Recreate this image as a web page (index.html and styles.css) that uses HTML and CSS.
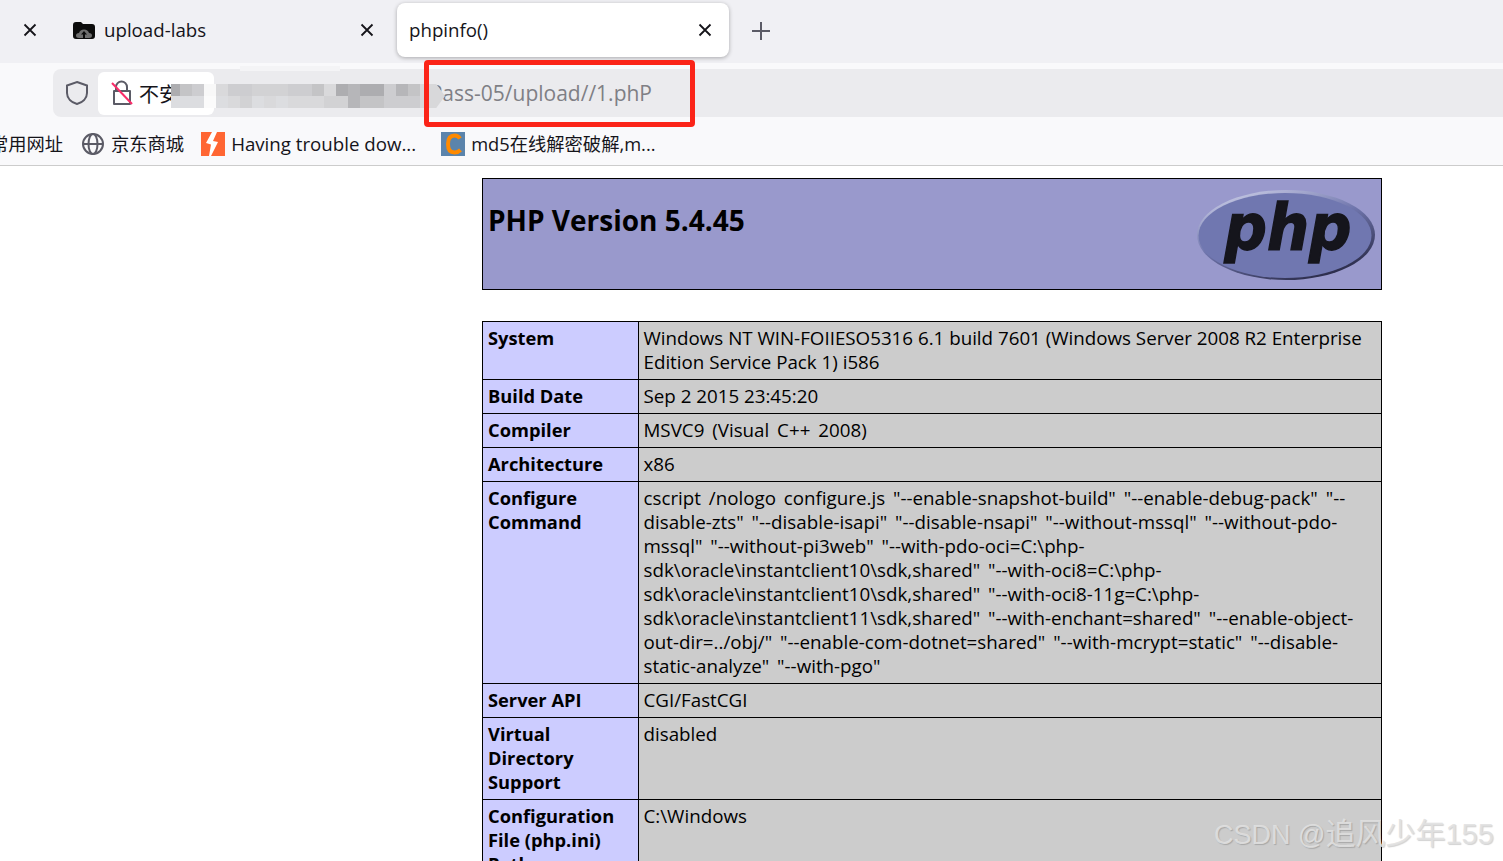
FILE: index.html
```html
<!DOCTYPE html>
<html lang="zh">
<head>
<meta charset="utf-8">
<title>phpinfo()</title>
<link rel="stylesheet" href="styles.css">
</head>
<body>
<header class="chrome">
  <div class="tabbar">
    <button class="x first"><svg width="14" height="14" viewBox="0 0 14 14"><path class="xp" d="M1.5 1.5l11 11M12.5 1.5l-11 11"/></svg></button>
    <div class="tab">
      <svg class="favicon" width="24" height="20" viewBox="0 0 24 20"><path d="M1 5q0-3 3-3h5l2 2h9q3 0 3 3v9q0 3-3 3H4q-3 0-3-3z" fill="#0c0c0c"/><path d="M7 18q-3 0-3-2.500T7 13q1-3.500 5-3.500t5 3.500q3 0 3 2.500T17 18z" fill="#6e6e6e"/><path d="M12 11l3 3.500H13V18h-2v-3.500H9z" fill="#0c0c0c"/></svg>
      <span class="tab-title">upload-labs</span>
      <button class="x"><svg width="14" height="14" viewBox="0 0 14 14"><path class="xp" d="M1.500 1.500l11 11M12.500 1.500l-11 11"/></svg></button>
    </div>
    <div class="tab active">
      <span class="tab-title">phpinfo()</span>
      <button class="x"><svg width="14" height="14" viewBox="0 0 14 14"><path class="xp" d="M1.500 1.500l11 11M12.500 1.500l-11 11"/></svg></button>
    </div>
    <button class="plus"><svg width="20" height="20" viewBox="0 0 20 20"><path d="M10 1v18M1 10h18" stroke="#5b5b66" stroke-width="2" fill="none"/></svg></button>
  </div>
  <div class="toolbar">
    <div class="urlbar">
      <svg class="shield" width="24" height="26" viewBox="0 0 24 26"><path d="M12 2l10 3.500V13c0 5.500-4.500 9.500-10 11C6.500 22.500 2 18.500 2 13V5.500z" fill="none" stroke="#5b5b66" stroke-width="2"/></svg>
      <div class="identity">
        <svg width="22" height="26" viewBox="0 0 22 26"><path d="M5 11V7a5.500 5.500 0 0 1 11 0v4M3 11h16v13H3z" fill="none" stroke="#5b5b66" stroke-width="2" stroke-linejoin="round"/><path d="M1 3l20 21" stroke="#fb2d6a" stroke-width="2"/></svg>
        <span class="insecure">不安全</span>
      </div>
      <span class="url">http://example.test/upload-labs/upload/Pass-05/upload//1.phP</span>
    </div>
  </div>
  <nav class="bookmarks">
    <span class="bm clip">常用网址</span>
    <span class="bm"><svg width="24" height="24" viewBox="0 0 24 24"><g fill="none" stroke="#5b5b66" stroke-width="2"><circle cx="12" cy="12" r="10"/><ellipse cx="12" cy="12" rx="4.500" ry="10"/><path d="M2 12h20"/></g></svg>京东商城</span>
    <span class="bm latin"><svg width="24" height="24" viewBox="0 0 24 24"><path d="M0 0h24v24H0z" fill="#ff6633"/><path d="M11 0L5 11l5 1.500L8 24h2l7-14-5-1 4-9z" fill="#fff"/></svg>Having trouble dow...</span>
    <span class="bm"><svg width="24" height="24" viewBox="0 0 24 24"><path d="M0 0h24v24H0z" fill="#5b84ac"/><path d="M19 6.500Q17 3.500 13.500 3.500 7 3.500 7 12t6.500 8.500Q17 20.500 19.500 18" fill="none" stroke="#ff8a00" stroke-width="4"/></svg>md5在线解密破解,m...</span>
  </nav>
</header>

<main class="page">
  <table class="info head">
    <tr class="h">
      <td>
        <div class="head-row">
          <h1>PHP Version 5.4.45</h1>
          <svg class="logo" width="180" height="92" viewBox="0 0 180 92">
            <defs>
              <linearGradient id="rim" x1="0.2" y1="0" x2="0.8" y2="1"><stop offset="0" stop-color="#c9cce6"/><stop offset="0.45" stop-color="#6f75ac"/><stop offset="1" stop-color="#23233e"/></linearGradient>
            </defs>
            <ellipse cx="90" cy="46" rx="89" ry="45" fill="url(#rim)"/>
            <ellipse cx="89" cy="46.500" rx="86.500" ry="42.500" fill="#7077b0"/>
            <text class="logo-text" x="92" y="61" text-anchor="middle" textLength="127" lengthAdjust="spacingAndGlyphs">php</text>
          </svg>
        </div>
      </td>
    </tr>
  </table>
  <table class="info">
    <tr><td class="e">System</td><td class="v">Windows NT WIN-FOIIESO5316 6.1 build 7601 (Windows Server 2008 R2 Enterprise<br>Edition Service Pack 1) i586</td></tr>
    <tr><td class="e">Build Date</td><td class="v">Sep 2 2015 23:45:20</td></tr>
    <tr><td class="e">Compiler</td><td class="v spaced">MSVC9 (Visual C++ 2008)</td></tr>
    <tr><td class="e">Architecture</td><td class="v">x86</td></tr>
    <tr><td class="e">Configure<br>Command</td><td class="v spaced">cscript /nologo configure.js "--enable-snapshot-build" "--enable-debug-pack" "--<br>disable-zts" "--disable-isapi" "--disable-nsapi" "--without-mssql" "--without-pdo-<br>mssql" "--without-pi3web" "--with-pdo-oci=C:\php-<br>sdk\oracle\instantclient10\sdk,shared" "--with-oci8=C:\php-<br>sdk\oracle\instantclient10\sdk,shared" "--with-oci8-11g=C:\php-<br>sdk\oracle\instantclient11\sdk,shared" "--with-enchant=shared" "--enable-object-<br>out-dir=../obj/" "--enable-com-dotnet=shared" "--with-mcrypt=static" "--disable-<br>static-analyze" "--with-pgo"</td></tr>
    <tr><td class="e">Server API</td><td class="v">CGI/FastCGI</td></tr>
    <tr><td class="e">Virtual<br>Directory<br>Support</td><td class="v">disabled</td></tr>
    <tr><td class="e">Configuration<br>File (php.ini)<br>Path</td><td class="v">C:\Windows</td></tr>
  </table>
</main>

<div class="redact">
  <div class="smear"></div>
  <div class="arrow"></div>
  <div class="mosaic">
    <i class="c1"></i><i class="c3"></i><i class="c4"></i><i class="c8"></i><i class="c6"></i><i class="c4"></i><i class="c4"></i><i class="c5"></i><i class="c5"></i><i class="c5"></i><i class="c4"></i><i class="c4"></i><i class="c3"></i><i class="c6"></i><i class="c1"></i><i class="c2"></i><i class="c1"></i><i class="c1"></i><i class="c4"></i><i class="c2"></i><i class="c3"></i>
    <i class="c7"></i><i class="c7"></i><i class="c7"></i><i class="c9"></i><i class="c7"></i><i class="c6"></i><i class="c5"></i><i class="c7"></i><i class="c6"></i><i class="c7"></i><i class="c6"></i><i class="c6"></i><i class="c6"></i><i class="c5"></i><i class="c5"></i><i class="c2"></i><i class="c3"></i><i class="c3"></i><i class="c4"></i><i class="c4"></i><i class="c4"></i>
  </div>
</div>
<div class="redbox"></div>
<div class="watermark"><span class="wm-a">CSDN @</span><span class="wm-b">追风少年</span><span class="wm-c">155</span></div>
</body>
</html>
```
FILE: styles.css
```css
html, body { margin: 0; height: 861px; overflow: hidden; background: #fff; }
body { font-family: "Open Sans", "Noto Sans CJK SC", sans-serif; color: #000; position: relative; }
button { border: 0; background: none; padding: 0; display: flex; align-items: center; justify-content: center; }

.chrome { background: #f9f9fb; border-bottom: 1px solid #ccc; height: 165px; overflow: hidden; display: flex; flex-direction: column; }
.tabbar { height: 63px; background: #f0f0f4; display: flex; align-items: flex-start; flex: none; }
.x.first { width: 14px; height: 14px; margin: 23px 0 0 23px; }
.xp { stroke: #15141a; stroke-width: 1.800; fill: none; }
.tab { display: flex; align-items: center; height: 54px; margin-top: 3px; color: #15141a; flex: none; box-sizing: border-box; }
.tab:not(.active) { width: 302px; margin-left: 35px; }
.favicon { margin-right: 8px; flex: none; }
.tab-title { font-size: 18.700px; flex: 1; white-space: nowrap; margin-bottom: 2px; }
.tab.active { width: 332px; margin-left: 23px; padding: 0 17px 0 12px; background: #fff; border-radius: 8px; box-shadow: 0 1px 4px rgba(0,0,0,.3); }
.plus { margin: 19px 0 0 22px; width: 20px; height: 24px; }

.toolbar { height: 58px; padding: 6px 0 0 53px; box-sizing: border-box; flex: none; }
.urlbar { height: 48px; background: #ebebee; border-radius: 8px 0 0 8px; display: flex; align-items: center; padding-left: 12px; white-space: nowrap; }
.shield { flex: none; }
.identity { width: 116px; height: 43px; margin-left: 9px; background: #fff; border-radius: 6px; display: flex; align-items: center; padding-left: 13px; box-sizing: border-box; flex: none; }
.insecure { font-size: 20px; margin-left: 6px; color: #15141a; }
.url { font-size: 21px; color: #7f7f85; margin: 0 0 0 10px; width: 428px; flex: none; direction: rtl; overflow: hidden; text-align: left; }

.bookmarks { height: 44px; display: flex; align-items: center; font-size: 18.300px; color: #15141a; white-space: nowrap; flex: none; }
.bm { display: flex; align-items: center; gap: 6px; }
.bm svg { margin-top: 2px; }
.bm.clip { margin-left: -10px; width: 73px; }
.bm.latin { font-size: 18.700px; }
.bm:nth-child(2) { margin-left: 18px; }
.bm:nth-child(3) { margin-left: 17px; }
.bm:nth-child(4) { margin-left: 25px; }

.page { margin: 12px 0 0 482px; width: 900px; }
.info { border-collapse: collapse; width: 900px; table-layout: fixed; margin-bottom: 31px; font-size: 18.760px; line-height: 24px; }
.info td { border: 1px solid #000; padding: 4px 5px 5px; vertical-align: top; white-space: nowrap; overflow: hidden; }
.e { width: 145px; background: #ccf; font-weight: 700; font-size: 18.300px; }
.v { background: #ccc; }
.spaced { word-spacing: 3px; }
.info td.v { padding-left: 4.500px; }
.h td { background: #99c; padding: 0 5px 0; height: 110px; }
.head-row { display: flex; justify-content: space-between; padding: 10px 0 0; }
h1 { margin: 12px 0 0; font-size: 28px; line-height: 38px; font-weight: 700; }
.logo { flex: none; }
.logo-text { font-family: "DejaVu Sans", sans-serif; font-weight: 700; font-style: italic; font-size: 64px; fill: #15151c; stroke: #15151c; stroke-width: 1.500; }

.redact { position: absolute; left: 0; top: 0; }
.mosaic { position: absolute; left: 171px; top: 84px; display: grid; grid-template-columns: 9px repeat(20, 12px); grid-auto-rows: 12px; }
.mosaic i { display: block; }
.c1 { background: #adadb0; }
.c2 { background: #b6b6b9; }
.c3 { background: #c4c4c6; }
.c4 { background: #cdcdd0; }
.c5 { background: #d2d2d4; }
.c6 { background: #d9d9db; }
.c7 { background: #dcdde0; }
.c8 { background: #f8f8f8; }
.c9 { background: #fbfbfb; }
.arrow { position: absolute; left: 420px; top: 84px; width: 25px; height: 24px; background: #d8d8da; clip-path: polygon(0 0, 65% 0, 100% 50%, 65% 100%, 0 100%); }
.smear { position: absolute; left: 240px; top: 66px; width: 100px; height: 5px; background: #f4f4f6; }
.redbox { position: absolute; left: 424px; top: 60px; width: 271px; height: 67px; box-sizing: border-box; border: 5px solid #fb2418; border-radius: 4px; }
.watermark { position: absolute; left: 1214px; top: 814px; font-family: "Liberation Sans", "Noto Sans CJK SC", sans-serif; line-height: 40px; color: rgba(225,225,225,.9); text-shadow: 1px 1px 1px rgba(0,0,0,.18); white-space: nowrap; }
.wm-a { font-size: 27px; }
.wm-b { font-size: 30px; }
.wm-c { font-size: 29px; }
```
